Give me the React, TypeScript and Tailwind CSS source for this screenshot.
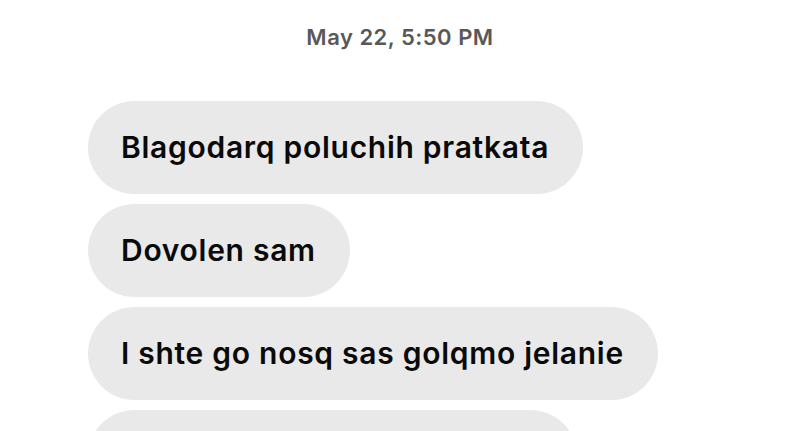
// Chat thread screenshot: timestamp + incoming bubbles
const messages = [
  "Blagodarq poluchih pratkata",
  "Dovolen sam",
  "I shte go nosq sas golqmo jelanie",
];

export default function App() {
  return (
    <div className="h-[431px] w-[800px] overflow-hidden bg-white">
      <div className="flex h-[74px] items-center justify-center">
        <span className="font-['Inter',sans-serif] text-[22px] font-semibold tracking-[0.5px] text-[#585858]">
          May 22, 5:50 PM
        </span>
      </div>

      <div className="flex flex-col items-start gap-[10px] pl-[88px] pt-[27px]">
        {messages.map((msg, i) => (
          <div
            key={i}
            className="flex h-[93px] items-center rounded-[47px] bg-[#e9e9e9] pl-[33px] pr-[34px] font-['Inter',sans-serif] text-[30px] font-semibold tracking-[0.72px] text-[#0a0a0a]"
          >
            {msg}
          </div>
        ))}
        {/* next bubble, only its top edge is on screen */}
        <div className="h-[93px] w-[489px] rounded-[47px] bg-[#e9e9e9]" />
      </div>
    </div>
  );
}
